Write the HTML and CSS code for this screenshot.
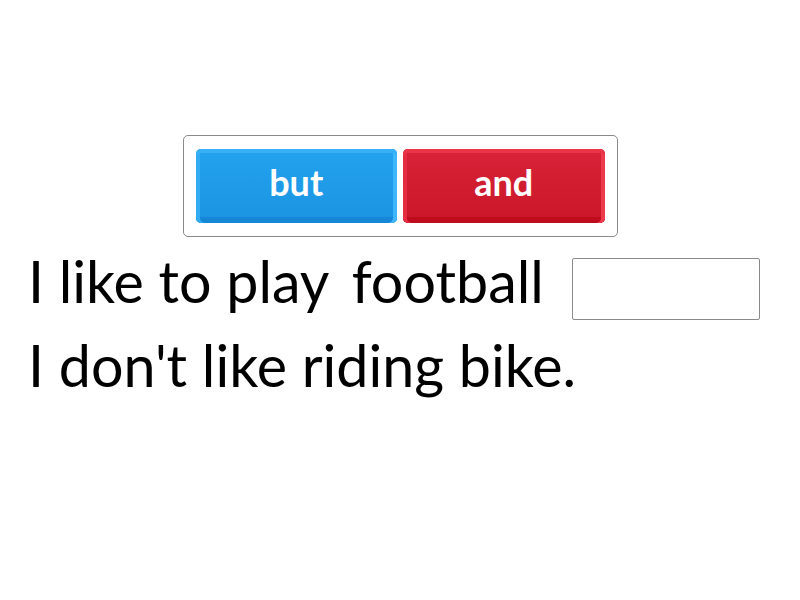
FILE: index.html
```html
<!DOCTYPE html>
<html>
<head>
<meta charset="utf-8">
<link rel="stylesheet" href="styles.css">
</head>
<body>
<div class="page">
  <div class="bank">
    <div class="chip chip-blue">but</div>
    <div class="chip chip-red">and</div>
  </div>
  <div class="sentence">
    <div class="line">I like to play <span class="word-gap">football</span><span class="slot"></span></div>
    <div class="line">I don't like riding bike.</div>
  </div>
</div>
</body>
</html>
```
FILE: styles.css
```css
html, body {
  margin: 0;
  padding: 0;
  background: #ffffff;
}
.page {
  width: 800px;
  height: 600px;
  padding-top: 135px;
  box-sizing: border-box;
  font-family: Lato, "Noto Sans", sans-serif;
}
.bank {
  width: 435px;
  height: 102px;
  box-sizing: border-box;
  margin: 0 auto;
  border: 1px solid #8a8a8a;
  border-radius: 5px;
  padding: 13px 12px 0 12px;
  display: flex;
  gap: 6px;
}
.chip {
  width: 202px;
  height: 74px;
  border-radius: 5px;
  color: #ffffff;
  font-weight: 700;
  font-size: 36px;
  display: flex;
  align-items: center;
  justify-content: center;
  padding-bottom: 8px;
  box-sizing: border-box;
}
.chip-blue {
  background: linear-gradient(#23a2ee, #1b94e2);
  box-shadow: inset 0 4px 0 #38b0f6, inset 4px 0 0 #30abf4, inset -4px 0 0 #3eb6fb, inset 0 -6px 0 #1687d6;
}
.chip-red {
  background: linear-gradient(#d82338, #ca1628);
  box-shadow: inset 0 4px 0 #ea3447, inset 4px 0 0 #e42d40, inset -4px 0 0 #ee3a4d, inset 0 -6px 0 #bf0c1c;
}
.sentence {
  padding-left: 28px;
  margin-top: 2px;
  font-size: 57.4px;
  color: #000000;
  line-height: 84px;
}
.line {
  display: flex;
  align-items: center;
  white-space: pre;
}
.word-gap {
  padding-left: 9px;
}
.slot {
  display: inline-block;
  width: 188px;
  height: 62px;
  box-sizing: border-box;
  border: 1px solid #8a8a8a;
  border-radius: 2px;
  margin-left: 28px;
  margin-top: 16px;
}
```
